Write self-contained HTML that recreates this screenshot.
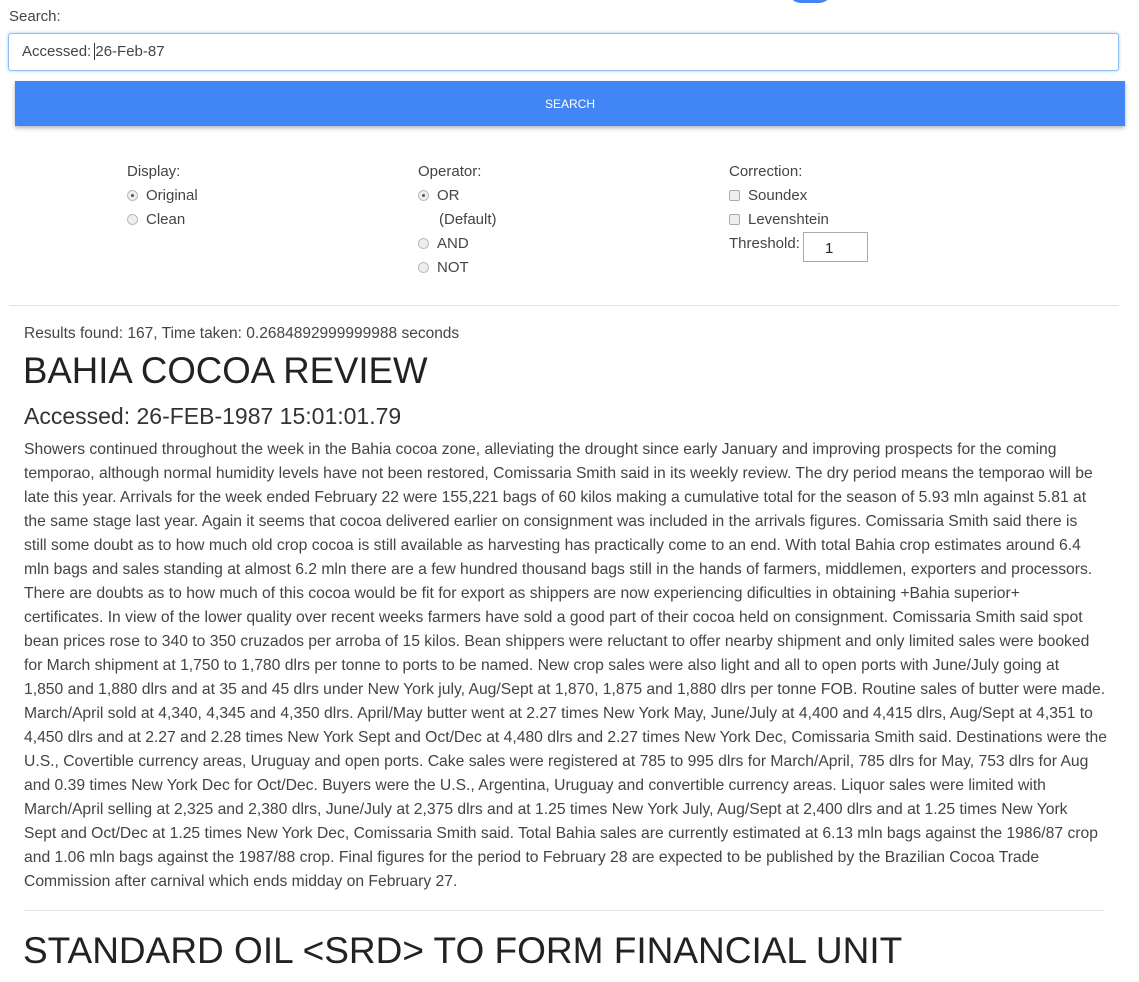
<!DOCTYPE html>
<html><head><meta charset="utf-8"><style>
body{margin:0;width:1139px;height:982px;overflow:hidden;background:#fff;font-family:"Liberation Sans",Arial,sans-serif;color:#333;position:relative}
.a{position:absolute;white-space:nowrap}
.lbl{font-size:15px;color:#444}
.rad{display:inline-block;width:11px;height:11px;border:1px solid #bbb;border-radius:50%;background:#eee;vertical-align:-1px;margin-right:8px;box-sizing:border-box;position:relative}
.rad.on:after{content:"";position:absolute;left:3px;top:3px;width:3px;height:3px;border-radius:50%;background:#555}
.chk{display:inline-block;width:11px;height:11px;border:1px solid #aaa;border-radius:2px;background:#eee;vertical-align:-1px;margin-right:8px;box-sizing:border-box}
.p{position:absolute;left:24px;font-size:15.7px;color:#444;line-height:24px;white-space:nowrap}
</style></head><body>
<div class="a" style="left:788px;top:-10px;width:44px;height:13px;border-radius:0 0 22px 22px;background:#4285f4"></div>
<div class="a lbl" style="left:9px;top:8px">Search:</div>
<div class="a" style="left:8px;top:33px;width:1111px;height:38px;border:1px solid #8fc0f5;box-shadow:0 0 3px #9ecaf7;border-radius:3px;box-sizing:border-box;background:#fff"></div>
<div class="a lbl" style="left:22px;top:43px;color:#444">Accessed: <span style="border-left:1px solid #333;margin-left:-1px"></span>26-Feb-87</div>
<div class="a" style="left:15px;top:81px;width:1110px;height:45px;background:#4285f4;box-shadow:0 2px 4px rgba(0,0,0,.3);color:#fff;font-size:12px;text-align:center;line-height:46px">SEARCH</div>

<div class="a lbl" style="left:127px;top:163px">Display:</div>
<div class="a lbl" style="left:127px;top:187px"><span class="rad on"></span>Original</div>
<div class="a lbl" style="left:127px;top:211px"><span class="rad"></span>Clean</div>

<div class="a lbl" style="left:418px;top:163px">Operator:</div>
<div class="a lbl" style="left:418px;top:187px"><span class="rad on"></span>OR</div>
<div class="a lbl" style="left:439px;top:211px">(Default)</div>
<div class="a lbl" style="left:418px;top:235px"><span class="rad"></span>AND</div>
<div class="a lbl" style="left:418px;top:259px"><span class="rad"></span>NOT</div>

<div class="a lbl" style="left:729px;top:163px">Correction:</div>
<div class="a lbl" style="left:729px;top:187px"><span class="chk"></span>Soundex</div>
<div class="a lbl" style="left:729px;top:211px"><span class="chk"></span>Levenshtein</div>
<div class="a lbl" style="left:729px;top:235px">Threshold:</div>
<div class="a" style="left:803px;top:232px;width:65px;height:30px;border:1px solid #aaa;box-sizing:border-box;font-size:15px;padding:7px 0 0 21px;color:#222">1</div>

<div class="a" style="left:9px;top:305px;width:1110px;height:1px;background:#e2e2e2"></div>
<div class="a" style="left:24px;top:325px;font-size:15.5px;color:#444">Results found: 167, Time taken: 0.2684892999999988 seconds</div>
<div class="a" style="left:23px;top:350px;font-size:36.6px;color:#222">BAHIA COCOA REVIEW</div>
<div class="a" style="left:24px;top:403px;font-size:23px;color:#333">Accessed: 26-FEB-1987 15:01:01.79</div>

<div class="p" style="top:438px">Showers continued throughout the week in the Bahia cocoa zone, alleviating the drought since early January and improving prospects for the coming<br>
temporao, although normal humidity levels have not been restored, Comissaria Smith said in its weekly review. The dry period means the temporao will be<br>
late this year. Arrivals for the week ended February 22 were 155,221 bags of 60 kilos making a cumulative total for the season of 5.93 mln against 5.81 at<br>
the same stage last year. Again it seems that cocoa delivered earlier on consignment was included in the arrivals figures. Comissaria Smith said there is<br>
still some doubt as to how much old crop cocoa is still available as harvesting has practically come to an end. With total Bahia crop estimates around 6.4<br>
mln bags and sales standing at almost 6.2 mln there are a few hundred thousand bags still in the hands of farmers, middlemen, exporters and processors.<br>
There are doubts as to how much of this cocoa would be fit for export as shippers are now experiencing dificulties in obtaining +Bahia superior+<br>
certificates. In view of the lower quality over recent weeks farmers have sold a good part of their cocoa held on consignment. Comissaria Smith said spot<br>
bean prices rose to 340 to 350 cruzados per arroba of 15 kilos. Bean shippers were reluctant to offer nearby shipment and only limited sales were booked<br>
for March shipment at 1,750 to 1,780 dlrs per tonne to ports to be named. New crop sales were also light and all to open ports with June/July going at<br>
1,850 and 1,880 dlrs and at 35 and 45 dlrs under New York july, Aug/Sept at 1,870, 1,875 and 1,880 dlrs per tonne FOB. Routine sales of butter were made.<br>
March/April sold at 4,340, 4,345 and 4,350 dlrs. April/May butter went at 2.27 times New York May, June/July at 4,400 and 4,415 dlrs, Aug/Sept at 4,351 to<br>
4,450 dlrs and at 2.27 and 2.28 times New York Sept and Oct/Dec at 4,480 dlrs and 2.27 times New York Dec, Comissaria Smith said. Destinations were the<br>
U.S., Covertible currency areas, Uruguay and open ports. Cake sales were registered at 785 to 995 dlrs for March/April, 785 dlrs for May, 753 dlrs for Aug<br>
and 0.39 times New York Dec for Oct/Dec. Buyers were the U.S., Argentina, Uruguay and convertible currency areas. Liquor sales were limited with<br>
March/April selling at 2,325 and 2,380 dlrs, June/July at 2,375 dlrs and at 1.25 times New York July, Aug/Sept at 2,400 dlrs and at 1.25 times New York<br>
Sept and Oct/Dec at 1.25 times New York Dec, Comissaria Smith said. Total Bahia sales are currently estimated at 6.13 mln bags against the 1986/87 crop<br>
and 1.06 mln bags against the 1987/88 crop. Final figures for the period to February 28 are expected to be published by the Brazilian Cocoa Trade<br>
Commission after carnival which ends midday on February 27.</div>

<div class="a" style="left:24px;top:910px;width:1080px;height:1px;background:#e2e2e2"></div>
<div class="a" style="left:23px;top:930px;font-size:37px;color:#222">STANDARD OIL &lt;SRD&gt; TO FORM FINANCIAL UNIT</div>
</body></html>
